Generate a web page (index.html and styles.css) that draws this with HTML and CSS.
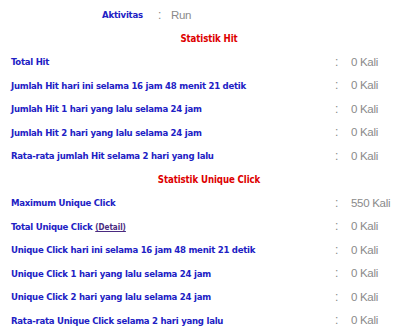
FILE: index.html
```html
<!DOCTYPE html>
<html>
<head>
<meta charset="utf-8">
<link rel="stylesheet" href="styles.css">
</head>
<body>
<div class="page">
  <div class="activity">
    <span class="act-label">Aktivitas</span>
    <span class="colon">:</span>
    <span class="value">Run</span>
  </div>
  <div class="heading">Statistik Hit</div>
  <div class="row"><span class="label">Total Hit</span><span class="colon">:</span><span class="value">0 Kali</span></div>
  <div class="row"><span class="label">Jumlah Hit hari ini selama 16 jam 48 menit 21 detik</span><span class="colon">:</span><span class="value">0 Kali</span></div>
  <div class="row"><span class="label">Jumlah Hit 1 hari yang lalu selama 24 jam</span><span class="colon">:</span><span class="value">0 Kali</span></div>
  <div class="row"><span class="label">Jumlah Hit 2 hari yang lalu selama 24 jam</span><span class="colon">:</span><span class="value">0 Kali</span></div>
  <div class="row"><span class="label">Rata-rata jumlah Hit selama 2 hari yang lalu</span><span class="colon">:</span><span class="value">0 Kali</span></div>
  <div class="heading">Statistik Unique Click</div>
  <div class="row"><span class="label">Maximum Unique Click</span><span class="colon">:</span><span class="value">550 Kali</span></div>
  <div class="row"><span class="label">Total Unique Click <a class="detail" href="#">(Detail)</a></span><span class="colon">:</span><span class="value">0 Kali</span></div>
  <div class="row"><span class="label">Unique Click hari ini selama 16 jam 48 menit 21 detik</span><span class="colon">:</span><span class="value">0 Kali</span></div>
  <div class="row"><span class="label">Unique Click 1 hari yang lalu selama 24 jam</span><span class="colon">:</span><span class="value">0 Kali</span></div>
  <div class="row"><span class="label">Unique Click 2 hari yang lalu selama 24 jam</span><span class="colon">:</span><span class="value">0 Kali</span></div>
  <div class="row"><span class="label">Rata-rata Unique Click selama 2 hari yang lalu</span><span class="colon">:</span><span class="value">0 Kali</span></div>
</div>
</body>
</html>
```
FILE: styles.css
```css
html, body {
  margin: 0;
  padding: 0;
  background: #ffffff;
}
.page {
  padding: 3px 0 0 11px;
  width: 389px;
  font-family: "DejaVu Sans Condensed", "DejaVu Sans", Verdana, sans-serif;
  font-stretch: condensed;
}
.activity {
  display: flex;
  align-items: center;
  height: 23.5px;
  padding-left: 91px;
}
.act-label {
  font-weight: bold;
  font-size: 9.5px;
  letter-spacing: -0.2px;
  color: #2121c4;
  width: 56px;
}
.activity .colon {
  width: 13px;
}
.heading {
  height: 23.5px;
  line-height: 23.5px;
  text-align: center;
  padding-left: 7px;
  font-weight: bold;
  font-size: 9.6px;
  letter-spacing: -0.1px;
  color: #dd0000;
}
.row {
  display: grid;
  grid-template-columns: 324px 16px 1fr;
  align-items: center;
  height: 23.5px;
}
.label {
  font-weight: bold;
  font-size: 9.5px;
  letter-spacing: -0.25px;
  color: #2121c4;
  white-space: nowrap;
}
.colon {
  font-family: "Liberation Sans", Arial, sans-serif;
  font-size: 12px;
  letter-spacing: 0;
  color: #8a8a8a;
}
.value {
  font-family: "Liberation Sans", Arial, sans-serif;
  font-size: 11.5px;
  color: #8a8a8a;
  letter-spacing: -0.3px;
}
.detail {
  font-size: 8px;
  letter-spacing: 0;
  color: #4a2a80;
  text-decoration: underline;
}
```
